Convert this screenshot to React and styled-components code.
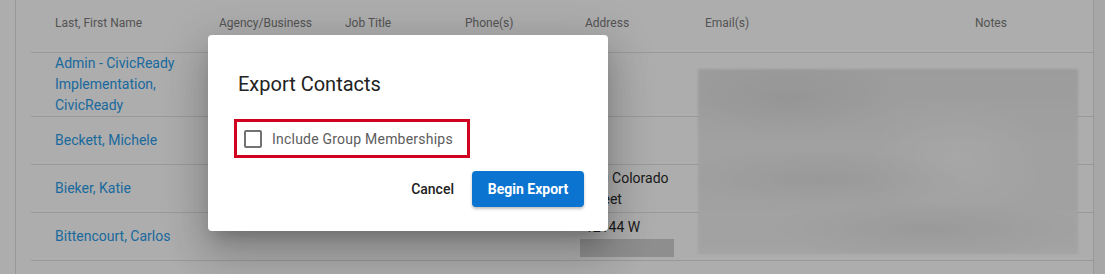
import React from "react";
import styled, { createGlobalStyle } from "styled-components";

const GlobalStyle = createGlobalStyle`
  html, body { margin: 0; padding: 0; background: #ffffff; }
  body { font-family: Roboto, "Liberation Sans", Arial, sans-serif; overflow: hidden; }
  * { box-sizing: border-box; }
`;

const Page = styled.div`
  display: flex;
  width: 1105px;
  height: 274px;
  overflow: hidden;
  position: relative;
`;

const Gutter = styled.div`
  width: 15px;
  flex: none;
  background: #ffffff;
`;

const Card = styled.div`
  width: 1079px;
  flex: none;
  background: #ffffff;
  border-left: 1px solid #e2e2e2;
  border-right: 1px solid #e2e2e2;
  padding-left: 15px;
  position: relative;
`;

const SideStrip = styled.div`
  flex: 1;
  background: #f6f6f6;
`;

const Row = styled.div`
  display: grid;
  grid-template-columns: 164px 126px 120px 120px 120px 270px 1fr;
  border-bottom: 1px solid #e2e2e2;
  min-height: ${(p) => (p.$header ? "53px" : "48px")};
  align-items: center;
`;

const HeadCell = styled.div`
  padding-left: 24px;
  font-size: 12px;
  line-height: 16px;
  color: #7c7c7c;
  align-self: start;
  padding-top: 15px;
`;

const NameCell = styled.div`
  padding-left: 24px;
  padding-right: 12px;
  font-size: 14px;
  line-height: 21px;
  color: #2a9be9;
`;

const Cell = styled.div`
  padding-left: 24px;
  font-size: 14px;
  line-height: 21px;
  color: #2a2a2a;
`;

const Redacted = styled.span`
  display: block;
  width: 94px;
  height: 18px;
  margin-left: -5px;
  margin-top: 1px;
  background: #d2d2d2;
`;

const BlurredEmails = styled.div`
  position: absolute;
  left: 682px;
  top: 69px;
  width: 380px;
  height: 185px;
  background:
    radial-gradient(ellipse 120px 40px at 90px 30px, rgba(0,0,0,0.05), transparent),
    radial-gradient(ellipse 160px 30px at 120px 110px, rgba(0,0,0,0.05), transparent),
    radial-gradient(ellipse 160px 30px at 230px 160px, rgba(0,0,0,0.05), transparent),
    radial-gradient(ellipse 90px 60px at 260px 90px, rgba(255,255,255,0.5), transparent),
    linear-gradient(180deg, #e6e6e6 0%, #ededed 40%, #f0f0f0 100%);
  filter: blur(1px);
`;

const Overlay = styled.div`
  position: absolute;
  inset: 0;
  background: rgba(0, 0, 0, 0.32);
`;

const Dialog = styled.div`
  position: absolute;
  left: 208px;
  top: 35px;
  width: 400px;
  height: 196px;
  background: #ffffff;
  border-radius: 4px;
  box-shadow: 0 11px 15px -7px rgba(0,0,0,.2), 0 24px 38px 3px rgba(0,0,0,.14), 0 9px 46px 8px rgba(0,0,0,.12);
  display: flex;
  flex-direction: column;
  padding: 37px 24px 24px 26px;
`;

const Title = styled.h2`
  margin: 0 0 23px 4px;
  font-size: 20px;
  line-height: 24px;
  font-weight: 400;
  color: #222222;
`;

const Highlight = styled.label`
  align-self: flex-start;
  display: inline-flex;
  align-items: center;
  gap: 10px;
  height: 39px;
  border: 3px solid #d0021f;
  padding: 0 14px 0 7px;
  font-size: 14px;
  letter-spacing: 0.22px;
  color: #5c5c5c;
`;

const Box = styled.span`
  width: 18px;
  height: 18px;
  border: 2px solid #727272;
  border-radius: 2px;
  flex: none;
`;

const Actions = styled.div`
  display: flex;
  justify-content: flex-end;
  align-items: center;
  gap: 18px;
  margin-top: 13px;
`;

const TextButton = styled.button`
  background: none;
  border: none;
  padding: 0;
  height: 36px;
  font-family: inherit;
  font-size: 14px;
  font-weight: 500;
  color: #222222;
`;

const PrimaryButton = styled.button`
  width: 112px;
  height: 36px;
  border: none;
  border-radius: 4px;
  background: #0a74d0;
  color: #ffffff;
  font-family: inherit;
  font-size: 14px;
  font-weight: 700;
  box-shadow: 0 2px 3px rgba(0,0,0,0.25);
`;

const headers = ["Last, First Name", "Agency/Business", "Job Title", "Phone(s)", "Address", "Email(s)", "Notes"];

const contacts = [
  { name: "Admin - CivicReady Implementation, CivicReady", address: null },
  { name: "Beckett, Michele", address: null },
  { name: "Bieker, Katie", address: "100 Colorado Street" },
  { name: "Bittencourt, Carlos", address: "12144 W", redacted: true },
];

export default function App() {
  return (
    <>
      <GlobalStyle />
      <Page>
        <Gutter />
        <Card>
          <Row $header>
            {headers.map((h) => (
              <HeadCell key={h}>{h}</HeadCell>
            ))}
          </Row>
          {contacts.map((c) => (
            <Row key={c.name}>
              <NameCell>{c.name}</NameCell>
              <Cell />
              <Cell />
              <Cell />
              <Cell>
                {c.address}
                {c.redacted && <Redacted />}
              </Cell>
              <Cell />
              <Cell />
            </Row>
          ))}
          <BlurredEmails />
        </Card>
        <SideStrip />
        <Overlay />
        <Dialog role="dialog" aria-label="Export Contacts">
          <Title>Export Contacts</Title>
          <Highlight>
            <Box />
            Include Group Memberships
          </Highlight>
          <Actions>
            <TextButton>Cancel</TextButton>
            <PrimaryButton>Begin Export</PrimaryButton>
          </Actions>
        </Dialog>
      </Page>
    </>
  );
}
